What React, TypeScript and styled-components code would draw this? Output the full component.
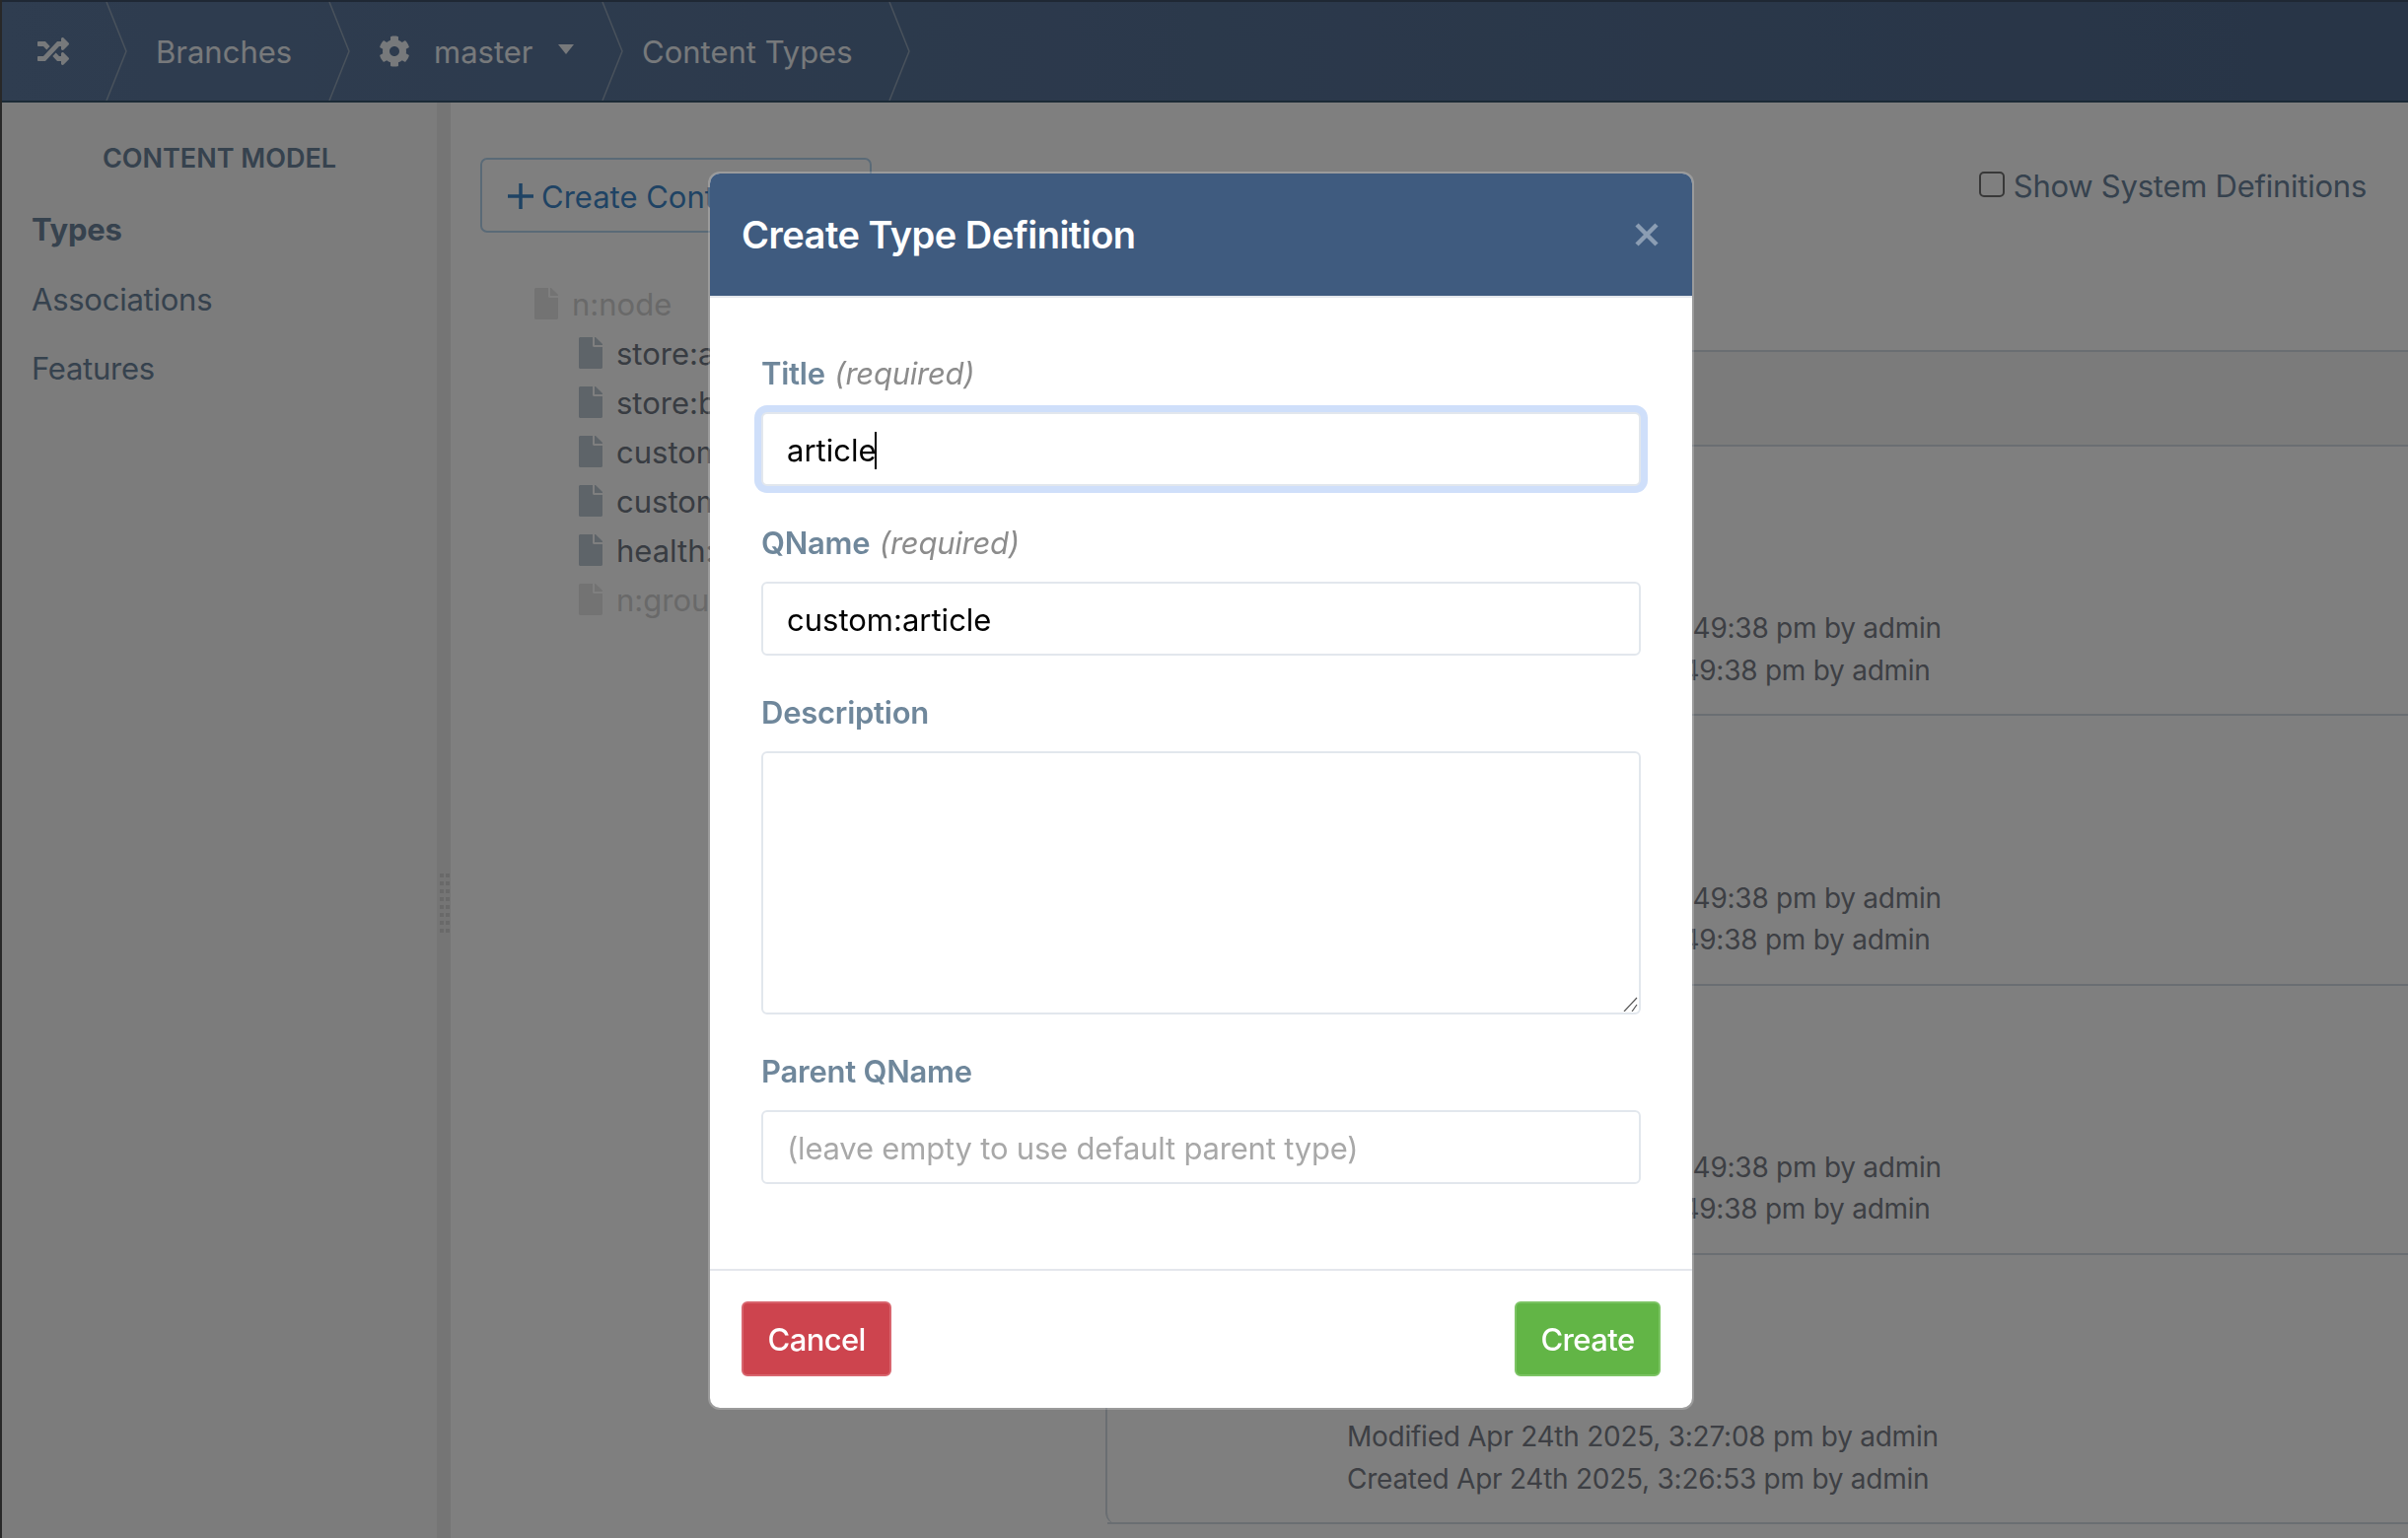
import { FaCog, FaFile, FaRandom } from "react-icons/fa";
import styled, { createGlobalStyle } from "styled-components";

const GlobalStyle = createGlobalStyle`
  html, body {
    margin: 0;
    height: 100%;
    overflow: hidden;
    background: #fff;
    font-family: Inter, "Liberation Sans", sans-serif;
  }
  * { box-sizing: border-box; }
`;

const Page = styled.div`
  height: 1560px;
  display: flex;
  flex-direction: column;
  border-left: 2px solid #505050;
`;

const TopBar = styled.header`
  height: 104px;
  flex: none;
  display: flex;
  align-items: center;
  background: linear-gradient(90deg, #5e7aa0 0%, #506a8e 100%);
  border-top: 2px solid #3e5068;
  border-bottom: 2px solid #36546c;
  color: #eef2f6;
  font-size: 31px;
`;

const Crumb = styled.div<{ $width: number; $pad?: number }>`
  position: relative;
  height: 100%;
  flex: none;
  display: flex;
  align-items: center;
  width: ${p => p.$width}px;
  padding-left: ${p => p.$pad ?? 48}px;
  gap: 24px;
`;

const Chevron = styled.svg`
  position: absolute;
  right: -21px;
  top: 0;
  width: 22px;
  height: 100%;
  color: #92a4b8;
`;

const Caret = styled.span`
  width: 0;
  height: 0;
  border-left: 8px solid transparent;
  border-right: 8px solid transparent;
  border-top: 10px solid #eef2f6;
  margin: -4px 0 0 1px;
`;

const Body = styled.div`
  flex: 1;
  display: flex;
  min-height: 0;
`;

const Sidebar = styled.aside`
  width: 441px;
  flex: none;
  background: #f8f8f8;
  color: #6c849c;
`;

const SidebarTitle = styled.h4`
  margin: 37px 0 17px;
  text-align: center;
  font-size: 27px;
  line-height: 40px;
  font-weight: 600;
`;

const SidebarItem = styled.div<{ $active?: boolean }>`
  padding-left: 30px;
  height: 70.5px;
  line-height: 70px;
  font-size: 31px;
  letter-spacing: -0.25px;
  font-weight: ${p => (p.$active ? 700 : 400)};
`;

const Splitter = styled.div`
  width: 14px;
  flex: none;
  background: #eaeaea;
  display: flex;
  align-items: center;
  justify-content: center;
`;

const Grip = styled.div`
  display: grid;
  grid-template-columns: 4px 4px;
  gap: 4px 2px;
  margin: 168px 0 0 2px;

  i {
    width: 4px;
    height: 4px;
    background: #d2d2d2;
  }
`;

const Content = styled.main`
  flex: 1;
  display: flex;
  min-width: 0;
`;

const LeftColumn = styled.section`
  width: 664px;
  flex: none;
  padding: 56px 0 0 30px;
`;

const CreateButton = styled.button`
  width: 397px;
  height: 76px;
  display: flex;
  align-items: center;
  gap: 8px;
  padding: 2px 0 0 26px;
  background: transparent;
  border: 2px solid #b4d4ee;
  border-radius: 7px;
  color: #3e86c8;
  font: 400 31px Inter, sans-serif;
  white-space: nowrap;
`;

const Tree = styled.ul`
  list-style: none;
  margin: 47px 0 0;
  padding: 0 0 0 55px;
`;

const TreeRow = styled.li<{ $indent?: boolean; $dim?: boolean }>`
  height: 50px;
  display: flex;
  align-items: center;
  gap: 14px;
  padding-left: ${p => (p.$indent ? 45 : 0)}px;
  font-size: 31px;
  color: ${p => (p.$dim ? "#d2d2d2" : "#707884")};

  svg {
    width: 24px;
    height: 32px;
    color: ${p => (p.$dim ? "#e6e6e6" : "#bcc8d2")};
  }
`;

const RightColumn = styled.section`
  flex: 1;
  min-width: 0;
  padding-top: 70px;
`;

const SystemToggle = styled.label`
  height: 26px;
  display: flex;
  align-items: center;
  justify-content: flex-end;
  gap: 9px;
  padding-right: 42px;
  font-size: 31px;
  letter-spacing: -0.25px;
  color: #6c849c;

  span {
    margin-top: 3px;
  }
`;

const Check = styled.input`
  appearance: none;
  width: 26px;
  height: 26px;
  margin: 0;
  border: 2px solid #707070;
  border-radius: 5px;
  background: #fff;
`;

const List = styled.div`
  margin-top: 155px;
  border-top: 2px solid #d4dce4;
  border-left: 2px solid #d4dce4;
  border-bottom-left-radius: 12px;
`;

const ListHeader = styled.div`
  height: 96px;
  background: #f6f6f6;
  border-bottom: 2px solid #d4dce4;
`;

const Row = styled.div`
  height: 273.25px;
  display: flex;
  flex-direction: column;
  justify-content: flex-end;
  padding: 0 0 23px 243px;
  border-bottom: 2px solid #d4dce4;
  font-size: 28px;
  line-height: 42.5px;
  letter-spacing: -0.25px;
  color: #7a7e88;
`;

const Backdrop = styled.div`
  position: fixed;
  inset: 0;
  background: rgba(0, 0, 0, 0.5);
`;

const Modal = styled.div`
  position: fixed;
  left: 718px;
  top: 174px;
  width: 1000px;
  background: #fff;
  border: 2px solid rgba(255, 255, 255, 0.22);
  border-radius: 12px;
  background-clip: padding-box;
  overflow: hidden;
`;

const ModalHeader = styled.div`
  height: 126px;
  display: flex;
  align-items: center;
  justify-content: space-between;
  padding: 0 34px 0 32px;
  background: #3f5b7f;
  border-bottom: 2px solid #e4e7ec;
`;

const ModalTitle = styled.h3`
  margin: 0;
  color: #fff;
  font-size: 38px;
  font-weight: 600;
  letter-spacing: -0.5px;
`;

const CloseIcon = styled.svg`
  width: 24px;
  height: 24px;
  color: #8b9db3;
`;

const ModalBody = styled.div`
  padding: 56px 52px 86px;
`;

const Field = styled.div`
  position: relative;

  & + & {
    margin-top: 37px;
  }
`;

const Label = styled.label`
  display: block;
  height: 40px;
  margin-bottom: 20px;
  line-height: 42px;
  font-size: 31px;
  font-weight: 600;
  letter-spacing: -0.25px;
  color: #6f879b;

  em {
    margin-left: 2px;
    font-weight: 400;
    letter-spacing: -0.25px;
    color: #8c8c8c;
  }
`;

const fieldCss = `
  display: block;
  width: 100%;
  padding: 2px 24px 0;
  background: #fff;
  border: 2px solid #e2e7ed;
  border-radius: 6px;
  font: 400 31px Inter, sans-serif;
  color: #000;
  outline: none;
`;

const TextInput = styled.input`
  ${fieldCss}
  height: 75px;

  &::placeholder {
    color: #a8a8a8;
    letter-spacing: -0.2px;
  }
`;

const FocusedInput = styled.div`
  ${fieldCss}
  height: 75px;
  display: flex;
  align-items: center;
  box-shadow: 0 0 0 7px #cfdffa;
`;

const TextCaret = styled.span`
  width: 2px;
  height: 38px;
  margin-left: -2px;
  background: #000;
`;

const TextArea = styled.textarea`
  ${fieldCss}
  height: 267px;
  resize: none;
`;

const ResizeGrip = styled.svg`
  position: absolute;
  right: 3px;
  bottom: 3px;
  width: 15px;
  height: 15px;
  color: #555;
`;

const ModalFooter = styled.div`
  display: flex;
  justify-content: space-between;
  padding: 31px 32px 32px 32px;
  border-top: 2px solid #e4e7ec;
`;

const ActionButton = styled.button<{ $tone: "cancel" | "create" }>`
  height: 76px;
  padding: 0 24.5px;
  background: ${p => (p.$tone === "cancel" ? "#cd444e" : "#62b546")};
  border: 2px solid ${p => (p.$tone === "cancel" ? "#d8656e" : "#7cc464")};
  border-radius: 6px;
  color: #fff;
  font: 500 31px Inter, sans-serif;
  letter-spacing: -0.6px;
`;

const rows = [
  ["Modified Apr 24th 2025, 3:49:38 pm by admin", "Created Apr 24th 2025, 3:49:38 pm by admin"],
  ["Modified Apr 24th 2025, 3:49:38 pm by admin", "Created Apr 24th 2025, 3:49:38 pm by admin"],
  ["Modified Apr 24th 2025, 3:49:38 pm by admin", "Created Apr 24th 2025, 3:49:38 pm by admin"],
  ["Modified Apr 24th 2025, 3:27:08 pm by admin", "Created Apr 24th 2025, 3:26:53 pm by admin"],
];

const treeRows = [
  { name: "store:address", indent: true },
  { name: "store:brand", indent: true },
  { name: "custom:author", indent: true },
  { name: "custom:book", indent: true },
  { name: "health:record", indent: true },
  { name: "n:group", indent: true, dim: true },
];

function ChevronLine() {
  return (
    <Chevron viewBox="0 0 22 100" preserveAspectRatio="none">
      <path d="M1 0 L21 50 L1 100" fill="none" stroke="currentColor" strokeWidth="1.5" />
    </Chevron>
  );
}

export default function App() {
  return (
    <>
      <GlobalStyle />
      <Page>
        <TopBar>
          <Crumb $width={106} $pad={36}>
            <FaRandom size={32} />
            <ChevronLine />
          </Crumb>
          <Crumb $width={226} $pad={50}>
            Branches
            <ChevronLine />
          </Crumb>
          <Crumb $width={277} $pad={50}>
            <FaCog size={32} />
            master
            <Caret />
            <ChevronLine />
          </Crumb>
          <Crumb $width={291} $pad={40}>
            Content Types
            <ChevronLine />
          </Crumb>
        </TopBar>
        <Body>
          <Sidebar>
            <SidebarTitle>CONTENT MODEL</SidebarTitle>
            <SidebarItem $active>Types</SidebarItem>
            <SidebarItem>Associations</SidebarItem>
            <SidebarItem>Features</SidebarItem>
          </Sidebar>
          <Splitter>
            <Grip>
              {Array.from({ length: 16 }, (_, i) => (
                <i key={i} />
              ))}
            </Grip>
          </Splitter>
          <Content>
            <LeftColumn>
              <CreateButton>
                <svg width="26" height="26" viewBox="0 0 26 26">
                  <path d="M13 0V26M0 13H26" stroke="currentColor" strokeWidth="3.5" />
                </svg>
                Create Content Type
              </CreateButton>
              <Tree>
                <TreeRow $dim>
                  <FaFile />
                  n:node
                </TreeRow>
                {treeRows.map(row => (
                  <TreeRow key={row.name} $indent={row.indent} $dim={row.dim}>
                    <FaFile />
                    {row.name}
                  </TreeRow>
                ))}
              </Tree>
            </LeftColumn>
            <RightColumn>
              <SystemToggle>
                <Check type="checkbox" />
                <span>Show System Definitions</span>
              </SystemToggle>
              <List>
                <ListHeader />
                {rows.map(row => (
                  <Row key={row.join()}>
                    <div>{row[0]}</div>
                    <div>{row[1]}</div>
                  </Row>
                ))}
              </List>
            </RightColumn>
          </Content>
        </Body>
      </Page>
      <Backdrop />
      <Modal>
        <ModalHeader>
          <ModalTitle>Create Type Definition</ModalTitle>
          <CloseIcon viewBox="0 0 24 24">
            <path d="M2 2L22 22M22 2L2 22" stroke="currentColor" strokeWidth="4.5" />
          </CloseIcon>
        </ModalHeader>
        <ModalBody>
          <Field>
            <Label>
              Title <em>(required)</em>
            </Label>
            <FocusedInput>
              article
              <TextCaret />
            </FocusedInput>
          </Field>
          <Field>
            <Label>
              QName <em>(required)</em>
            </Label>
            <TextInput readOnly defaultValue="custom:article" />
          </Field>
          <Field>
            <Label>Description</Label>
            <TextArea />
            <ResizeGrip viewBox="0 0 15 15">
              <path d="M1 15L14 1M9 15L14 8" fill="none" stroke="currentColor" strokeWidth="1.2" />
            </ResizeGrip>
          </Field>
          <Field>
            <Label>Parent QName</Label>
            <TextInput placeholder="(leave empty to use default parent type)" />
          </Field>
        </ModalBody>
        <ModalFooter>
          <ActionButton $tone="cancel">Cancel</ActionButton>
          <ActionButton $tone="create">Create</ActionButton>
        </ModalFooter>
      </Modal>
    </>
  );
}
